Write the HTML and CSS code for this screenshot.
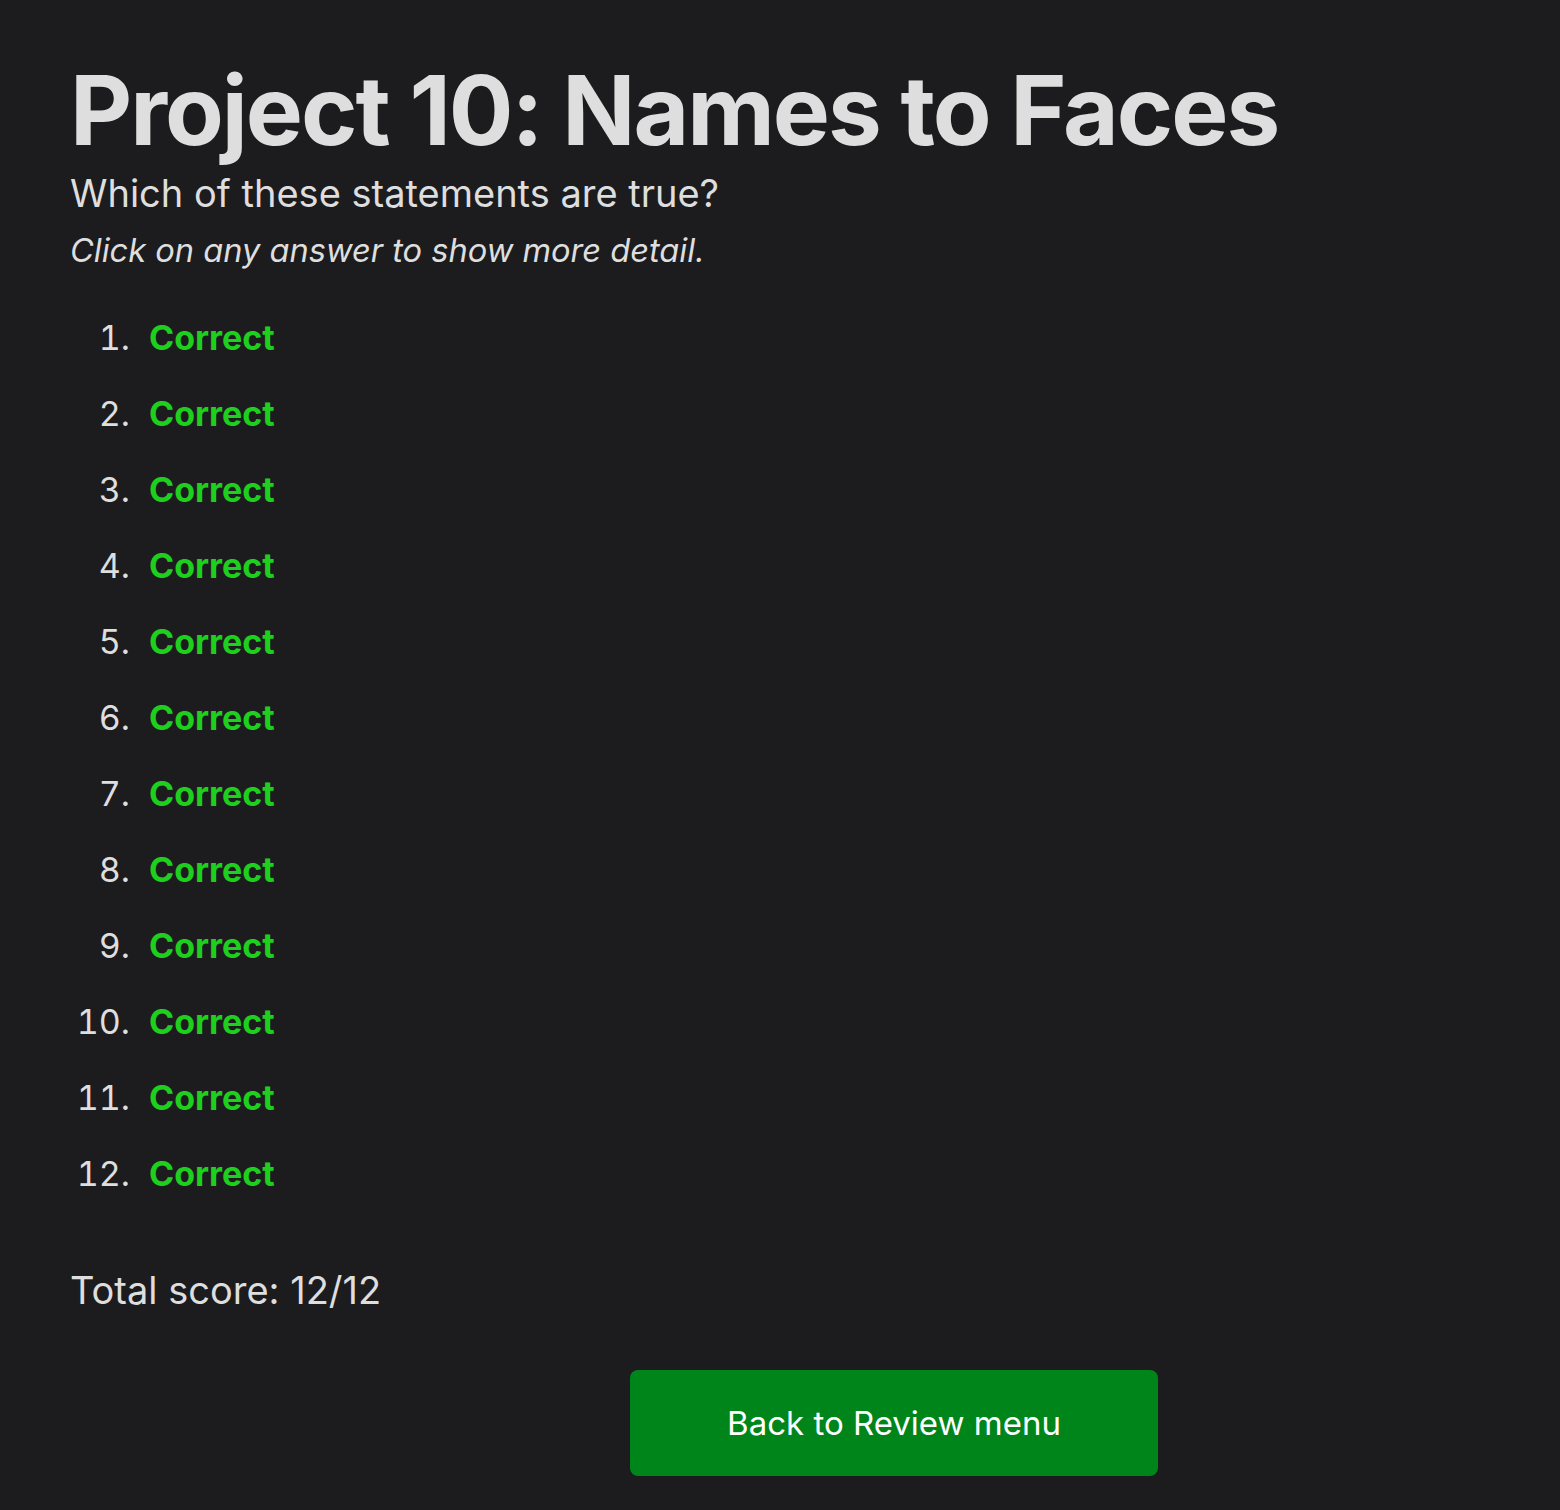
FILE: index.html
```html
<!DOCTYPE html>
<html>
<head>
<meta charset="utf-8">
<link rel="stylesheet" href="styles.css">
</head>
<body>
<main class="page">
  <h1 class="title">Project 10: Names to Faces</h1>
  <p class="question">Which of these statements are true?</p>
  <p class="hint">Click on any answer to show more detail.</p>
  <ol class="answers">
    <li><span class="correct">Correct</span></li>
    <li><span class="correct">Correct</span></li>
    <li><span class="correct">Correct</span></li>
    <li><span class="correct">Correct</span></li>
    <li><span class="correct">Correct</span></li>
    <li><span class="correct">Correct</span></li>
    <li><span class="correct">Correct</span></li>
    <li><span class="correct">Correct</span></li>
    <li><span class="correct">Correct</span></li>
    <li><span class="correct">Correct</span></li>
    <li><span class="correct">Correct</span></li>
    <li><span class="correct">Correct</span></li>
  </ol>
  <p class="score">Total score: 12/12</p>
  <div class="actions">
    <button class="back">Back to Review menu</button>
  </div>
</main>
</body>
</html>
```

FILE: styles.css
```css
html, body {
  margin: 0;
  padding: 0;
  background: #1c1c1e;
}
body {
  font-family: Inter, "Noto Sans", sans-serif;
  color: #dedede;
}
.page {
  padding: 52px 70px 0 70px;
}
.title {
  margin: 0;
  font-size: 96px;
  font-weight: 700;
  line-height: 116px;
  letter-spacing: -2px;
}
.question {
  margin: 0;
  font-size: 38px;
  line-height: 50px;
}
.hint {
  margin: 10px 0 0 0;
  font-size: 32.6px;
  line-height: 44px;
  font-style: italic;
}
.answers {
  margin: 28px 0 0 0;
  padding-left: 69px;
  font-size: 34px;
  line-height: 76px;
}
.answers li {
  padding-left: 10px;
}
.answers li::marker {
  color: #dedede;
}
.correct {
  color: #1ecf1e;
  font-weight: 700;
}
.score {
  margin: 53px 0 0 0;
  font-size: 38px;
  line-height: 50px;
}
.actions {
  margin-top: 55px;
  padding-left: 560px;
}
.back {
  width: 528px;
  height: 106px;
  border: none;
  border-radius: 8px;
  background: #00851b;
  color: #ffffff;
  font-family: Inter, "Noto Sans", sans-serif;
  font-size: 33px;
}
```
